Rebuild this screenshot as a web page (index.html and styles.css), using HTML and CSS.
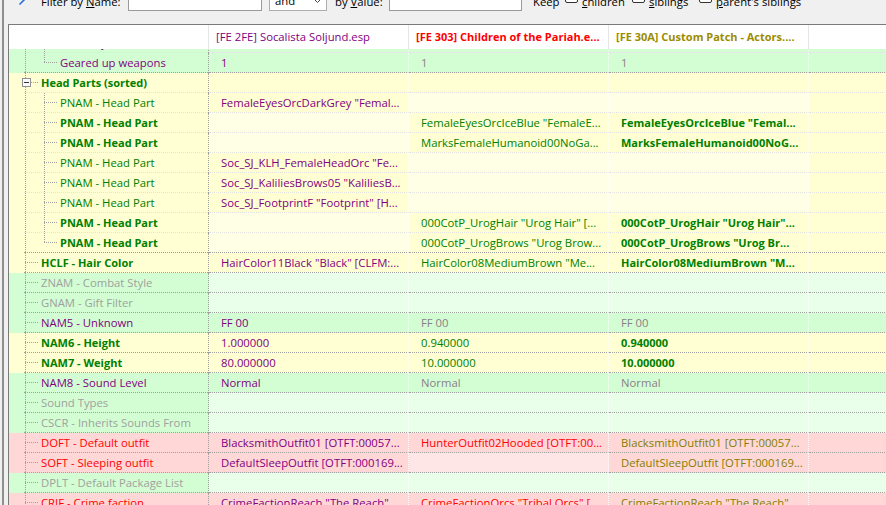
FILE: index.html
```html
<!doctype html>
<html lang="en">
  <head>
    <meta charset="UTF-8" />
    <title>Record View</title>
    <link rel="stylesheet" href="styles.css">
  </head>
  <body>
    <div class="window">
      <div class="splitter"></div>
      <div class="main">
        <div class="toolbar">
          <span class="tool-icon">
            <svg width="12" height="12" viewBox="0 0 12 12">
              <path d="M1.5 10.5 L7 5" stroke="#2a6fd6" stroke-width="1.6" />
              <path d="M8.5 1 L9.2 2.8 L11 3.5 L9.2 4.2 L8.5 6 L7.8 4.2 L6 3.5 L7.8 2.8 Z" fill="#f0a030" />
            </svg>
          </span>
          <label class="lbl w-name">Filter by <u>N</u>ame:</label>
          <span class="input w-in1"></span>
          <span class="combo">and
            <svg width="9" height="6" viewBox="0 0 9 6"><path d="M1 1 L4.5 4.5 L8 1" fill="none" stroke="#444" /></svg>
          </span>
          <label class="lbl w-val">by <u>V</u>alue:</label>
          <span class="input w-in2"></span>
          <span class="lbl w-keep">Keep</span>
          <span class="check"></span><label class="lbl w-chk"><u>c</u>hildren</label>
          <span class="check"></span><label class="lbl w-chk"><u>s</u>iblings</label>
          <span class="check"></span><label class="lbl"><u>p</u>arent's siblings</label>
        </div>

        <div class="grid">
          <div class="head">
            <div></div>
            <div class="p">[FE 2FE] Socalista Soljund.esp</div>
            <div class="r b">[FE 303] Children of the Pariah.e...</div>
            <div class="ol b">[FE 30A] Custom Patch - Actors....</div>
            <div></div>
          </div>

          <div class="rows">
            <div class="row green sub cut">
              <div class="c1"><div class="node"><span class="v"></span><span class="k t"></span><span class="p">Far away model distance</span></div></div>
              <div></div><div></div><div></div><div></div>
            </div>
            <div class="row green">
              <div class="c1"><div class="node"><span class="v"></span><span class="k l"></span><span class="p">Geared up weapons</span></div></div>
              <div class="p">1</div><div class="m">1</div><div class="m">1</div><div></div>
            </div>
            <div class="row yellow sub">
              <div class="c1"><div class="node"><span class="k x"><span class="box"></span></span><span class="g b">Head Parts (sorted)</span></div></div>
              <div></div><div></div><div></div><div></div>
            </div>
            <div class="row yellow sub">
              <div class="c1"><div class="node"><span class="v"></span><span class="k t"></span><span class="g">PNAM - Head Part</span></div></div>
              <div class="p">FemaleEyesOrcDarkGrey "Femal...</div><div class="e"></div><div class="e"></div><div></div>
            </div>
            <div class="row yellow sub">
              <div class="c1"><div class="node"><span class="v"></span><span class="k t"></span><span class="g b">PNAM - Head Part</span></div></div>
              <div class="e"></div><div class="g">FemaleEyesOrcIceBlue "FemaleE...</div><div class="g b">FemaleEyesOrcIceBlue "Femal...</div><div></div>
            </div>
            <div class="row yellow sub">
              <div class="c1"><div class="node"><span class="v"></span><span class="k t"></span><span class="g b">PNAM - Head Part</span></div></div>
              <div class="e"></div><div class="g">MarksFemaleHumanoid00NoGa...</div><div class="g b">MarksFemaleHumanoid00NoG...</div><div></div>
            </div>
            <div class="row yellow sub">
              <div class="c1"><div class="node"><span class="v"></span><span class="k t"></span><span class="g">PNAM - Head Part</span></div></div>
              <div class="p">Soc_SJ_KLH_FemaleHeadOrc "Fe...</div><div class="e"></div><div class="e"></div><div></div>
            </div>
            <div class="row yellow sub">
              <div class="c1"><div class="node"><span class="v"></span><span class="k t"></span><span class="g">PNAM - Head Part</span></div></div>
              <div class="p">Soc_SJ_KaliliesBrows05 "KaliliesB...</div><div class="e"></div><div class="e"></div><div></div>
            </div>
            <div class="row yellow sub">
              <div class="c1"><div class="node"><span class="v"></span><span class="k t"></span><span class="g">PNAM - Head Part</span></div></div>
              <div class="p">Soc_SJ_FootprintF "Footprint" [H...</div><div class="e"></div><div class="e"></div><div></div>
            </div>
            <div class="row yellow sub">
              <div class="c1"><div class="node"><span class="v"></span><span class="k t"></span><span class="g b">PNAM - Head Part</span></div></div>
              <div class="e"></div><div class="g">000CotP_UrogHair "Urog Hair" [...</div><div class="g b">000CotP_UrogHair "Urog Hair"...</div><div></div>
            </div>
            <div class="row yellow">
              <div class="c1"><div class="node"><span class="v"></span><span class="k l"></span><span class="g b">PNAM - Head Part</span></div></div>
              <div class="e"></div><div class="g">000CotP_UrogBrows "Urog Brow...</div><div class="g b">000CotP_UrogBrows "Urog Br...</div><div></div>
            </div>
            <div class="row yellow">
              <div class="c1"><div class="node"><span class="k t"></span><span class="g b">HCLF - Hair Color</span></div></div>
              <div class="p">HairColor11Black "Black" [CLFM:...</div><div class="g">HairColor08MediumBrown "Me...</div><div class="g b">HairColor08MediumBrown "M...</div><div></div>
            </div>
            <div class="row green">
              <div class="c1"><div class="node"><span class="k t"></span><span class="x">ZNAM - Combat Style</span></div></div>
              <div class="e"></div><div class="e"></div><div class="e"></div><div class="e"></div>
            </div>
            <div class="row green">
              <div class="c1"><div class="node"><span class="k t"></span><span class="x">GNAM - Gift Filter</span></div></div>
              <div class="e"></div><div class="e"></div><div class="e"></div><div class="e"></div>
            </div>
            <div class="row green">
              <div class="c1"><div class="node"><span class="k t"></span><span class="p">NAM5 - Unknown</span></div></div>
              <div class="p">FF 00</div><div class="m">FF 00</div><div class="m">FF 00</div><div></div>
            </div>
            <div class="row yellow">
              <div class="c1"><div class="node"><span class="k t"></span><span class="g b">NAM6 - Height</span></div></div>
              <div class="p">1.000000</div><div class="g">0.940000</div><div class="g b">0.940000</div><div></div>
            </div>
            <div class="row yellow">
              <div class="c1"><div class="node"><span class="k t"></span><span class="g b">NAM7 - Weight</span></div></div>
              <div class="p">80.000000</div><div class="g">10.000000</div><div class="g b">10.000000</div><div></div>
            </div>
            <div class="row green">
              <div class="c1"><div class="node"><span class="k t"></span><span class="p">NAM8 - Sound Level</span></div></div>
              <div class="p">Normal</div><div class="m">Normal</div><div class="m">Normal</div><div></div>
            </div>
            <div class="row green">
              <div class="c1"><div class="node"><span class="k t"></span><span class="x">Sound Types</span></div></div>
              <div class="e"></div><div class="e"></div><div class="e"></div><div class="e"></div>
            </div>
            <div class="row green">
              <div class="c1"><div class="node"><span class="k t"></span><span class="x">CSCR - Inherits Sounds From</span></div></div>
              <div class="e"></div><div class="e"></div><div class="e"></div><div class="e"></div>
            </div>
            <div class="row red">
              <div class="c1"><div class="node"><span class="k t"></span><span class="r">DOFT - Default outfit</span></div></div>
              <div class="p">BlacksmithOutfit01 [OTFT:00057...</div><div class="r">HunterOutfit02Hooded [OTFT:00...</div><div class="ol">BlacksmithOutfit01 [OTFT:00057...</div><div></div>
            </div>
            <div class="row red">
              <div class="c1"><div class="node"><span class="k t"></span><span class="r">SOFT - Sleeping outfit</span></div></div>
              <div class="p">DefaultSleepOutfit [OTFT:000169...</div><div class="e"></div><div class="ol">DefaultSleepOutfit [OTFT:000169...</div><div></div>
            </div>
            <div class="row green">
              <div class="c1"><div class="node"><span class="k t"></span><span class="x">DPLT - Default Package List</span></div></div>
              <div class="e"></div><div class="e"></div><div class="e"></div><div class="e"></div>
            </div>
            <div class="row red">
              <div class="c1"><div class="node"><span class="k t"></span><span class="r">CRIF - Crime faction</span></div></div>
              <div class="p">CrimeFactionReach "The Reach"...</div><div class="r">CrimeFactionOrcs "Tribal Orcs" [...</div><div class="ol">CrimeFactionReach "The Reach"...</div><div></div>
            </div>
          </div>
        </div>
      </div>
    </div>
  </body>
</html>
```

FILE: styles.css
```css
html,
body {
  margin: 0;
  height: 100%;
  overflow: hidden;
}
body {
  background: #f0f0f0;
  font-family: "Open Sans", "Noto Sans", sans-serif;
  font-size: 11.3px;
  color: #000;
}
.window {
  display: flex;
  height: 100%;
}
.splitter {
  flex: none;
  width: 2px;
  margin: 0 4px 0 2px;
  background: #8f8f8f;
}
.main {
  flex: 1;
  min-width: 0;
  display: flex;
  flex-direction: column;
  overflow: hidden;
}

/* filter bar, scrolled half out of view */
.toolbar {
  flex: none;
  box-sizing: border-box;
  height: 36px;
  margin-top: -12px;
  padding-bottom: 12px;
  display: flex;
  align-items: center;
  white-space: nowrap;
}
.tool-icon {
  flex: none;
  width: 33px;
  padding-left: 10px;
  box-sizing: border-box;
  display: flex;
}
.lbl {
  flex: none;
  margin-top: 3px;
}
.w-name { width: 87px; }
.w-val { width: 54px; }
.w-keep { width: 32px; }
.w-chk { width: 50px; margin-left: 4px; }
.check + .lbl { margin-left: 4px; }
.input {
  flex: none;
  height: 21px;
  box-sizing: border-box;
  background: #fff;
  border: 1px solid #9a9a9a;
  margin-top: 1px;
}
.w-in1 { width: 134px; }
.w-in2 { width: 133px; margin-right: 11px; }
.combo {
  flex: none;
  box-sizing: border-box;
  width: 58px;
  height: 21px;
  margin: 1px 8px 0 7px;
  padding: 0 4px 0 5px;
  background: #fff;
  border: 1px solid #adadad;
  display: flex;
  align-items: center;
  justify-content: space-between;
}
.check {
  flex: none;
  width: 13px;
  height: 13px;
  box-sizing: border-box;
  background: #fff;
  border: 1px solid #333;
  border-radius: 2px;
  margin-top: -7px;
}

/* record grid */
.grid {
  flex: 1;
  border-top: 1px solid #7a7a7a;
  border-left: 1px solid #7a7a7a;
  background: #fff;
  overflow: hidden;
}
.head {
  display: grid;
  grid-template-columns: repeat(5, 200px);
  height: 24px;
}
.head > div {
  box-sizing: border-box;
  border-right: 1px solid #e5e5e5;
  padding-left: 7px;
  line-height: 23px;
  white-space: nowrap;
  overflow: hidden;
}
.rows {
  overflow: hidden;
}
.row {
  display: grid;
  grid-template-columns: repeat(5, 200px);
  height: 20px;
}
.row.cut {
  margin-top: -16px;
}
.row > div {
  box-sizing: border-box;
  height: 20px;
  padding-left: 12px;
  line-height: 19px;
  border-bottom: 1px dotted #a0a0a0;
  border-right: 1px dotted #fff;
  white-space: nowrap;
  overflow: hidden;
}
.row > .c1 {
  display: flex;
  padding-left: 15px;
  border-bottom: none;
  border-right-color: #a0a0a0;
}
.row.sub > div {
  border-bottom-color: #e2e2e2;
}
.node {
  flex: 1;
  display: flex;
  box-sizing: border-box;
  height: 20px;
  border-bottom: 1px dotted #a0a0a0;
}
.row.sub .node {
  border-bottom-color: #e2e2e2;
}

/* tree guides */
.v,
.k {
  flex: none;
  height: 19px;
}
.v {
  width: 19px;
  background: repeating-linear-gradient(#a0a0a0 0 1px, transparent 1px 2px) 1px 0 / 1px 19px no-repeat;
}
.k {
  width: 17px;
}
.k.t {
  background:
    repeating-linear-gradient(90deg, #a0a0a0 0 1px, transparent 1px 2px) 1px 9px / 13px 1px no-repeat,
    repeating-linear-gradient(#a0a0a0 0 1px, transparent 1px 2px) 1px 0 / 1px 19px no-repeat;
}
.k.l {
  background:
    repeating-linear-gradient(90deg, #a0a0a0 0 1px, transparent 1px 2px) 1px 9px / 13px 1px no-repeat,
    repeating-linear-gradient(#a0a0a0 0 1px, transparent 1px 2px) 1px 0 / 1px 10px no-repeat;
}
.k.x {
  background:
    repeating-linear-gradient(90deg, #a0a0a0 0 1px, transparent 1px 2px) 7px 9px / 8px 1px no-repeat,
    repeating-linear-gradient(#a0a0a0 0 1px, transparent 1px 2px) 1px 0 / 1px 19px no-repeat;
}
.box {
  display: block;
  width: 9px;
  height: 9px;
  box-sizing: border-box;
  margin: 5px 0 0 -2px;
  border: 1px solid #919191;
  background: linear-gradient(#333, #333) center / 5px 1px no-repeat, #fcfcfc;
}

/* cell colours */
.row.green > div { background-color: #d3fed3; }
.row.green > .e { background-color: #e9ffe9; }
.row.yellow > div { background-color: #ffffd3; }
.row.yellow > .e { background-color: #ffffe6; }
.row.red > div { background-color: #ffd7d7; }
.row.red > .e { background-color: #ffe6e6; }

/* text colours */
.p { color: #800080; }
.g { color: #008000; }
.r { color: #ff0000; }
.ol { color: #808000; }
.head .ol { color: #9c8c00; }
.m { color: #8a7e8a; }
.x { color: #a0a0a0; }
.b { font-weight: bold; font-size: 11px; }
```
